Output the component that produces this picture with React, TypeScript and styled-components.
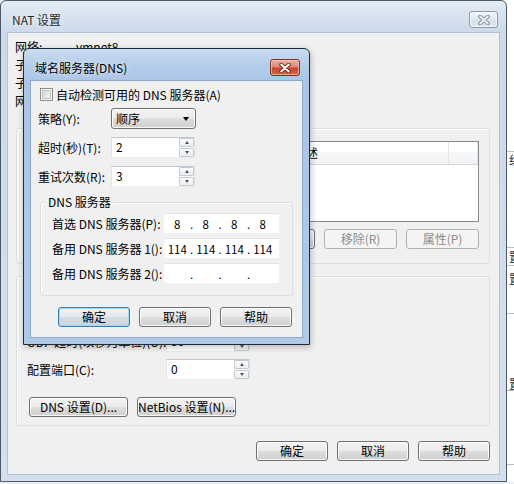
import React from "react";
import styled, { createGlobalStyle } from "styled-components";

const Global = createGlobalStyle`
  html, body { margin: 0; padding: 0; }
  body {
    width: 514px; height: 484px; overflow: hidden; background: #eceef1;
    font-family: "Noto Sans CJK SC", "Microsoft YaHei", sans-serif;
    font-size: 12px; color: #000;
  }
  * { box-sizing: border-box; }
`;

const Desktop = styled.div`
  position: relative; width: 514px; height: 484px; overflow: hidden;
  background: #eceef1;
`;

/* ---------- window behind (only a sliver visible) ---------- */
const BackWindow = styled.div`
  position: absolute; left: 498px; top: 0; width: 60px; height: 482px;
  background: #ffffff; border-left: 1px solid #9aa3ad;
  display: flex; flex-direction: column;
`;
const BackRow = styled.div<{ $h: number; $line?: boolean }>`
  height: ${(p) => p.$h}px; flex: none;
  border-bottom: ${(p) => (p.$line ? "1px solid #b9bec4" : "none")};
  font-size: 12px; line-height: ${(p) => p.$h}px; padding-left: 10px;
  white-space: nowrap; overflow: hidden; color: #222;
`;

/* ---------- window chrome ---------- */
const Window = styled.div<{ $active?: boolean }>`
  position: absolute; display: flex; flex-direction: column;
  border: 1px solid ${(p) => (p.$active ? "#1f2b3a" : "#4a5868")};
  border-radius: 6px 6px 0 0;
  background: ${(p) =>
    p.$active
      ? "linear-gradient(180deg, #cadcf1 0px, #b7cfea 14px, #aac5e6 31px, #b1cae8 100%)"
      : "linear-gradient(180deg, #e4ecf5 0px, #d6e2ef 16px, #cddaea 31px, #d5e0ed 100%)"};
`;
const MainWindow = styled(Window)`
  left: 0; top: 0; width: 507px; height: 482px;
`;
const DnsWindow = styled(Window)`
  left: 23px; top: 48px; width: 287px; height: 297px;
  box-shadow: 1px 2px 6px rgba(0, 0, 0, 0.25);
`;
const TitleBar = styled.div<{ $pr: number }>`
  height: 31px; flex: none; display: flex; align-items: center;
  justify-content: space-between; padding: 6px ${(p) => p.$pr}px 0 11px;
`;
const TitleText = styled.span<{ $active?: boolean }>`
  font-size: 12px; line-height: 14px;
  color: ${(p) => (p.$active ? "#000" : "#2a2a2a")};
  text-shadow: 0 0 6px rgba(255, 255, 255, 0.9);
`;
const CloseBtn = styled.div<{ $active?: boolean; $w: number }>`
  width: ${(p) => p.$w}px; height: 17px; border-radius: 3px;
  display: flex; align-items: center; justify-content: center;
  border: 1px solid ${(p) => (p.$active ? "#7d3426" : "#8e9aa8")};
  background: ${(p) =>
    p.$active
      ? "linear-gradient(180deg, #eab0a3 0%, #dc8a77 45%, #c9462b 55%, #d4664a 100%)"
      : "linear-gradient(180deg, rgba(255,255,255,0.55) 0%, rgba(240,244,249,0.4) 50%, rgba(214,224,236,0.5) 51%, rgba(230,237,245,0.6) 100%)"};
  box-shadow: inset 0 0 0 1px
    ${(p) => (p.$active ? "rgba(255,210,200,0.6)" : "rgba(255,255,255,0.6)")};
`;
const Client = styled.div<{ $active?: boolean }>`
  flex: 1; margin: 0 6px 6px; background: #f0f0f0;
  border: 1px solid ${(p) => (p.$active ? "#8ea8c8" : "#b4c3d4")};
  display: flex; flex-direction: column; min-height: 0;
`;

const XIcon = ({ active }: { active?: boolean }) => (
  <svg width="12" height="10" viewBox="0 0 12 10">
    <path
      d="M2.2 1.6 L9.8 8.4 M9.8 1.6 L2.2 8.4"
      stroke={active ? "#6b2315" : "#7b8796"}
      strokeWidth="3.8"
      strokeLinecap="round"
    />
    <path
      d="M2.2 1.6 L9.8 8.4 M9.8 1.6 L2.2 8.4"
      stroke={active ? "#ffffff" : "#eef2f6"}
      strokeWidth="2"
      strokeLinecap="round"
    />
  </svg>
);

/* ---------- controls ---------- */
const Button = styled.button<{ $w?: number; $default?: boolean }>`
  width: ${(p) => p.$w ?? 72}px; height: 20px; flex: none; padding: 0;
  font-family: inherit; font-size: 12px; line-height: 14px; color: #000;
  white-space: nowrap; overflow: visible;
  border-radius: 3px;
  border: 1px solid ${(p) => (p.$default ? "#3c7fb1" : "#707070")};
  background: ${(p) =>
    p.$default
      ? "linear-gradient(180deg, #eef3f6 0%, #e3eaef 48%, #d3dde4 52%, #c9d5dd 100%)"
      : "linear-gradient(180deg, #f3f3f3 0%, #ebebeb 48%, #dddddd 52%, #cfcfcf 100%)"};
  box-shadow: inset 0 0 0 1px
    ${(p) => (p.$default ? "#a6d6f2" : "rgba(255,255,255,0.85)")};
  &:disabled {
    color: #8d8d8d; border-color: #adb2b5;
    background: #f4f4f4; box-shadow: none;
  }
`;

const Row = styled.div<{ $mt: number; $pl?: number; $h?: number }>`
  display: flex; align-items: center; flex: none;
  margin-top: ${(p) => p.$mt}px; padding-left: ${(p) => p.$pl ?? 0}px;
  height: ${(p) => p.$h ?? 21}px;
`;
const Label = styled.span<{ $w?: number }>`
  width: ${(p) => (p.$w ? `${p.$w}px` : "auto")}; flex: none;
  white-space: nowrap; line-height: 14px;
`;
const CheckBox = styled.span`
  width: 13px; height: 13px; flex: none; margin-right: 3px;
  border: 1px solid #8f8f8f;
  background: linear-gradient(135deg, #cfcfcf 0%, #e6e6e6 55%, #f6f6f6 100%);
  box-shadow: inset 0 0 0 1px #f4f4f4, inset 0 0 0 2px #c4c4c4;
`;
const Combo = styled.div<{ $w: number }>`
  width: ${(p) => p.$w}px; height: 21px; display: flex; align-items: center;
  justify-content: space-between; padding: 0 5px 0 4px; border-radius: 3px;
  border: 1px solid #707070;
  background: linear-gradient(180deg, #f3f3f3 0%, #ebebeb 48%, #dddddd 52%, #cfcfcf 100%);
  box-shadow: inset 0 0 0 1px rgba(255, 255, 255, 0.85);
`;
const DropArrow = styled.span`
  width: 0; height: 0; border-left: 3.5px solid transparent;
  border-right: 3.5px solid transparent; border-top: 4px solid #000;
  margin-right: 1px;
`;
const TextBox = styled.div<{ $w: number }>`
  width: ${(p) => p.$w}px; height: 21px; flex: none; display: flex;
  align-items: stretch; background: #fff;
  border: 1px solid #e2e3ea; border-top-color: #c3c6cc; border-bottom-color: #e9ecf0;
`;
const BoxText = styled.span`
  flex: 1; padding: 2px 0 0 4px; line-height: 14px;
`;
const Spinner = styled.div`
  width: 15px; display: flex; flex-direction: column; gap: 1px;
`;
const SpinBtn = styled.div<{ $up?: boolean }>`
  flex: 1; display: flex; align-items: center; justify-content: center;
  border: 1px solid #c2cad4; border-radius: 1px;
  background: linear-gradient(180deg, #fbfbfb 0%, #eceef0 100%);
  &::after {
    content: ""; width: 0; height: 0;
    border-left: 2.5px solid transparent; border-right: 2.5px solid transparent;
    ${(p) => (p.$up ? "border-bottom: 3px solid #4d5560;" : "border-top: 3px solid #4d5560;")}
  }
`;
const IpBox = styled.div`
  width: 117px; height: 21px; flex: none; display: flex; align-items: center;
  background: #fff; padding: 0 4px 0 1px;
  border: 1px solid #eef0f3; border-top-color: #e2e4e8;
  font-size: 11.5px;
`;
const IpPart = styled.span`
  flex: 1; text-align: center; line-height: 14px;
`;
const IpDot = styled.span`
  width: 4px; text-align: center; line-height: 14px;
`;

const Group = styled.div<{ $mt: number; $ml: number; $mr: number; $pb: number }>`
  display: flex; flex-direction: column; flex: none;
  margin: ${(p) => p.$mt}px ${(p) => p.$mr}px 0 ${(p) => p.$ml}px;
  padding-bottom: ${(p) => p.$pb}px;
  border: 1px solid #d5dfe5; border-radius: 3px;
  box-shadow: inset 1px 1px 0 #ffffff;
`;
const GroupTitle = styled.span<{ $ml: number }>`
  align-self: flex-start; height: 14px; line-height: 14px;
  margin: -8px 0 0 ${(p) => p.$ml}px; padding: 0 2px; background: #f0f0f0;
`;

/* ---------- main window content ---------- */
const InfoList = styled.div`
  display: flex; flex-direction: column; padding: 5px 0 0 7px; flex: none;
`;
const InfoRow = styled.div`
  height: 18px; display: flex; align-items: center;
`;
const ListView = styled.div`
  margin: 6px 10px 0 9px; height: 81px; flex: none; background: #fff;
  border: 1px solid #848a92; display: flex; flex-direction: column;
`;
const ListHeader = styled.div`
  height: 23px; display: flex;
  background: linear-gradient(180deg, #ffffff 0%, #ffffff 45%, #f6f7f8 46%, #f1f2f3 100%);
  border-bottom: 1px solid #d5d5d5;
`;
const HeaderCell = styled.div<{ $w?: number }>`
  ${(p) => (p.$w ? `width: ${p.$w}px; flex: none;` : "flex: 1;")}
  padding-left: 4px; display: flex; align-items: center; line-height: 14px;
  border-right: 1px solid #e3e4e6; white-space: nowrap; overflow: hidden;
`;
const ButtonRow = styled.div<{ $mt: number; $end?: boolean; $pl?: number; $pr?: number }>`
  display: flex; gap: 9px; flex: none; margin-top: ${(p) => p.$mt}px;
  justify-content: ${(p) => (p.$end ? "flex-end" : "flex-start")};
  padding-left: ${(p) => p.$pl ?? 0}px; padding-right: ${(p) => p.$pr ?? 0}px;
`;

const SpinBox = ({ w, value }: { w: number; value: string }) => (
  <TextBox $w={w}>
    <BoxText>{value}</BoxText>
    <Spinner>
      <SpinBtn $up />
      <SpinBtn />
    </Spinner>
  </TextBox>
);

const Ip = ({ parts }: { parts: string[] }) => (
  <IpBox>
    <IpPart>{parts[0]}</IpPart>
    <IpDot>.</IpDot>
    <IpPart>{parts[1]}</IpPart>
    <IpDot>.</IpDot>
    <IpPart>{parts[2]}</IpPart>
    <IpDot>.</IpDot>
    <IpPart>{parts[3]}</IpPart>
  </IpBox>
);

export default function App() {
  return (
    <Desktop>
      <Global />
      <BackWindow>
        <BackRow $h={152} $line />
        <BackRow $h={16}>组</BackRow>
        <BackRow $h={80} $line />
        <BackRow $h={18} $line>置</BackRow>
        <BackRow $h={26}>置</BackRow>
        <BackRow $h={22} $line />
        <BackRow $h={62} />
        <BackRow $h={15} $line>置</BackRow>
        <BackRow $h={74} $line />
      </BackWindow>

      <MainWindow>
        <TitleBar $pr={8}>
          <TitleText>NAT 设置</TitleText>
          <CloseBtn $w={29}>
            <XIcon />
          </CloseBtn>
        </TitleBar>
        <Client>
          <InfoList>
            <InfoRow>
              <Label $w={61}>网络:</Label>
              <Label>vmnet8</Label>
            </InfoRow>
            <InfoRow>
              <Label $w={61}>子网 IP:</Label>
              <Label>192.168.80.0</Label>
            </InfoRow>
            <InfoRow>
              <Label $w={61}>子网掩码:</Label>
              <Label>255.255.255.0</Label>
            </InfoRow>
            <InfoRow>
              <Label $w={61}>网关 IP(G):</Label>
              <Label>192.168.80.2</Label>
            </InfoRow>
          </InfoList>

          <Group $mt={18} $ml={8} $mr={9} $pb={14}>
            <GroupTitle $ml={6}>端口转发(F)</GroupTitle>
            <ListView>
              <ListHeader>
                <HeaderCell $w={70}>主机端口</HeaderCell>
                <HeaderCell $w={60}>类型</HeaderCell>
                <HeaderCell $w={133}>虚拟机 IP 地址</HeaderCell>
                <HeaderCell $w={159}>描述</HeaderCell>
                <HeaderCell />
              </ListHeader>
            </ListView>
            <ButtonRow $mt={7} $end $pr={10}>
              <Button $w={73}>添加(A)...</Button>
              <Button $w={73} disabled>
                移除(R)
              </Button>
              <Button $w={73} disabled>
                属性(P)
              </Button>
            </ButtonRow>
          </Group>

          <Group $mt={12} $ml={8} $mr={9} $pb={8}>
            <GroupTitle $ml={6}>高级</GroupTitle>
            <Row $mt={7} $pl={10} $h={14}>
              <CheckBox />
              <Label>允许活动的 FTP(T)</Label>
            </Row>
            <Row $mt={6} $pl={10} $h={14}>
              <CheckBox />
              <Label>允许任何组织唯一标识符(O)</Label>
            </Row>
            <Row $mt={7} $pl={10}>
              <Label $w={139}>UDP 超时(以秒为单位)(U):</Label>
              <SpinBox w={84} value="30" />
            </Row>
            <Row $mt={7} $pl={10}>
              <Label $w={139}>配置端口(C):</Label>
              <SpinBox w={84} value="0" />
            </Row>
            <ButtonRow $mt={17} $pl={12}>
              <Button $w={99}>DNS 设置(D)...</Button>
              <Button $w={99}>NetBios 设置(N)...</Button>
            </ButtonRow>
          </Group>

          <ButtonRow $mt={15} $end $pr={9}>
            <Button>确定</Button>
            <Button>取消</Button>
            <Button>帮助</Button>
          </ButtonRow>
        </Client>
      </MainWindow>

      <DnsWindow $active>
        <TitleBar $pr={9}>
          <TitleText $active>域名服务器(DNS)</TitleText>
          <CloseBtn $active $w={30}>
            <XIcon active />
          </CloseBtn>
        </TitleBar>
        <Client $active>
          <Row $mt={7} $pl={9} $h={13}>
            <CheckBox />
            <Label>自动检测可用的 DNS 服务器(A)</Label>
          </Row>
          <Row $mt={7} $pl={7}>
            <Label $w={73}>策略(Y):</Label>
            <Combo $w={85}>
              <span>顺序</span>
              <DropArrow />
            </Combo>
          </Row>
          <Row $mt={8} $pl={7}>
            <Label $w={73}>超时(秒)(T):</Label>
            <SpinBox w={84} value="2" />
          </Row>
          <Row $mt={8} $pl={7}>
            <Label $w={73}>重试次数(R):</Label>
            <SpinBox w={84} value="3" />
          </Row>

          <Group $mt={15} $ml={9} $mr={9} $pb={11}>
            <GroupTitle $ml={5}>DNS 服务器</GroupTitle>
            <Row $mt={4} $pl={11}>
              <Label $w={111}>首选 DNS 服务器(P):</Label>
              <Ip parts={["8", "8", "8", "8"]} />
            </Row>
            <Row $mt={4} $pl={11}>
              <Label $w={111}>备用 DNS 服务器 1():</Label>
              <Ip parts={["114", "114", "114", "114"]} />
            </Row>
            <Row $mt={4} $pl={11}>
              <Label $w={111}>备用 DNS 服务器 2():</Label>
              <Ip parts={["", "", "", ""]} />
            </Row>
          </Group>

          <ButtonRow $mt={11} $end $pr={10}>
            <Button $default>确定</Button>
            <Button>取消</Button>
            <Button>帮助</Button>
          </ButtonRow>
        </Client>
      </DnsWindow>
    </Desktop>
  );
}
